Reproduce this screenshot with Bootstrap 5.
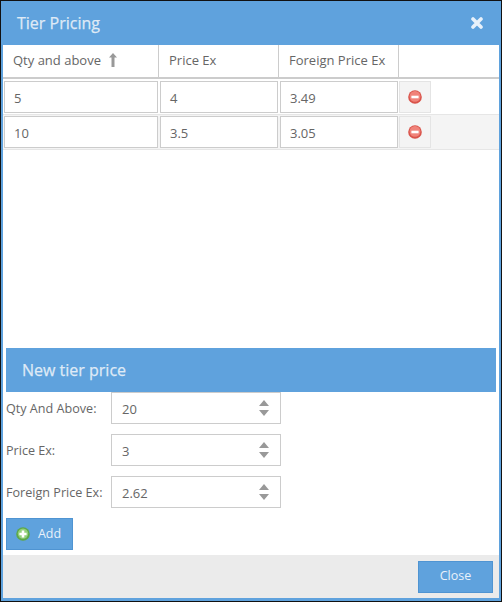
<!DOCTYPE html>
<html lang="en">
<head>
<meta charset="utf-8">
<title>Tier Pricing</title>
<link rel="stylesheet" href="https://cdn.jsdelivr.net/npm/bootstrap@5.3.0/dist/css/bootstrap.min.css">
<style>
html,body{margin:0;padding:0;background:#fff;}
body{font-family:"Open Sans",sans-serif;font-size:13px;color:#666;width:502px;height:602px;overflow:hidden;}
.win{width:502px;height:602px;border:1px solid #111;display:flex;flex-direction:column;}
.win-in{flex:1;border:solid #5fa2dd;border-width:0 2px 3px 2px;display:flex;flex-direction:column;min-height:0;background:#fff;}
.win-head{height:44px;flex:none;background:#5fa2dd;color:#dfeaf6;margin:0 -2px;padding:0 16px;display:flex;align-items:center;justify-content:space-between;font-size:16px;font-weight:500;-webkit-text-stroke:.25px #dfeaf6;}
.win-head svg{margin-right:2px;}
.tier-table{width:100%;table-layout:fixed;border-collapse:separate;border-spacing:0;margin:0;}
.tier-table th{height:34px;font-weight:400;padding:0 10px;border-right:1px solid #ccc;border-bottom:2px solid #ccc;color:#666;vertical-align:middle;background:#fff;}
.tier-table th:last-child{border-right:0;}
.tier-table td{padding:2px 1px 1px 1px;border-bottom:1px solid #e6e6e6;height:36px;vertical-align:middle;}
.tier-table td:last-child{padding-left:0;}
.tier-table tr.alt td{background:#f4f4f4;padding-top:1px;height:35px;}
.cell-inp{display:block;width:100%;height:32px;border:1px solid #ccc;background:#fff;padding:0 9px;line-height:32px;color:#666;}
.del-btn{display:flex;align-items:center;justify-content:center;width:32px;height:32px;background:#f4f4f4;border:1px solid #e4e4e4;padding:0;}
.sort-i{margin-left:8px;vertical-align:-2px;}
.tbl-area{flex:1;min-height:0;}
.sec-head{margin:0 3px;height:44px;background:#5fa2dd;color:#dfeaf6;font-size:16px;font-weight:500;-webkit-text-stroke:.25px #dfeaf6;display:flex;align-items:center;padding-left:16px;flex:none;}
.frm{margin:0 3px;display:flex;flex-direction:column;gap:10px;flex:none;}
.frm-row{display:flex;align-items:center;height:32px;}
.frm-row label{width:105px;flex:none;margin:0;padding-top:2px;color:#666;white-space:nowrap;font-size:12.6px;}
.num-box{width:170px;height:32px;border:1px solid #ccc;display:flex;align-items:center;justify-content:space-between;padding:0 11px 0 10px;color:#666;}
.num-box span{position:relative;top:2px;}
.blue-btn{background:#5fa2dd;border:1px solid #4f94d2;color:#e8f1fa;border-radius:0;font-size:12.5px;height:32px;padding:0;display:inline-flex;align-items:center;justify-content:center;}
.add-btn{width:67px;gap:8px;margin:10px 3px 5px;flex:none;padding-right:2px;}
.foot{flex:none;height:43px;background:#ebebeb;display:flex;align-items:center;justify-content:flex-end;padding-right:6px;}
.close-btn{width:75px;}
</style>
</head>
<body>
<div class="win">
<div class="win-in">
  <div class="win-head">
    <span>Tier Pricing</span>
    <svg width="12" height="12" viewBox="0 0 12 12"><path d="M2 2 L10 10 M10 2 L2 10" stroke="#e8f1fa" stroke-width="3.6" stroke-linecap="round"/></svg>
  </div>
  <div class="tbl-area">
    <table class="tier-table">
      <colgroup><col style="width:156px"><col style="width:120px"><col style="width:120px"><col></colgroup>
      <thead><tr>
        <th>Qty and above<svg class="sort-i" width="8" height="14" viewBox="0 0 8 14"><path d="M4 0 L8 4.5 H5.5 V14 H2.5 V4.5 H0 Z" fill="#999"/></svg></th>
        <th>Price Ex</th><th>Foreign Price Ex</th><th></th>
      </tr></thead>
      <tbody>
        <tr>
          <td><div class="cell-inp">5</div></td><td><div class="cell-inp">4</div></td><td><div class="cell-inp">3.49</div></td>
          <td><button class="del-btn" type="button" aria-label="Remove"><svg width="14" height="14" viewBox="0 0 14 14"><circle cx="7" cy="7" r="6.8" fill="#d9534a"/><circle cx="7" cy="6.4" r="5.4" fill="#f0837a"/><rect x="3.4" y="5.7" width="7.2" height="2.6" fill="#fff"/></svg></button></td>
        </tr>
        <tr class="alt">
          <td><div class="cell-inp">10</div></td><td><div class="cell-inp">3.5</div></td><td><div class="cell-inp">3.05</div></td>
          <td><button class="del-btn" type="button" aria-label="Remove"><svg width="14" height="14" viewBox="0 0 14 14"><circle cx="7" cy="7" r="6.8" fill="#d9534a"/><circle cx="7" cy="6.4" r="5.4" fill="#f0837a"/><rect x="3.4" y="5.7" width="7.2" height="2.6" fill="#fff"/></svg></button></td>
        </tr>
      </tbody>
    </table>
  </div>
  <div class="sec-head">New tier price</div>
  <div class="frm">
    <div class="frm-row"><label>Qty And Above:</label><div class="num-box"><span>20</span><svg width="10" height="16" viewBox="0 0 10 16"><path d="M5 0 L10 6 H0 Z M0 10 H10 L5 16 Z" fill="#999"/></svg></div></div>
    <div class="frm-row"><label>Price Ex:</label><div class="num-box"><span>3</span><svg width="10" height="16" viewBox="0 0 10 16"><path d="M5 0 L10 6 H0 Z M0 10 H10 L5 16 Z" fill="#999"/></svg></div></div>
    <div class="frm-row"><label>Foreign Price Ex:</label><div class="num-box"><span>2.62</span><svg width="10" height="16" viewBox="0 0 10 16"><path d="M5 0 L10 6 H0 Z M0 10 H10 L5 16 Z" fill="#999"/></svg></div></div>
  </div>
  <button class="btn blue-btn add-btn" type="button"><svg width="14" height="14" viewBox="0 0 14 14"><circle cx="7" cy="7" r="6.8" fill="#5da84a"/><circle cx="7" cy="6.6" r="5.2" fill="#93d07c"/><path d="M5.7 3.4 H8.3 V5.7 H10.6 V8.3 H8.3 V10.6 H5.7 V8.3 H3.4 V5.7 H5.7 Z" fill="#fff"/></svg>Add</button>
  <div class="foot"><button class="btn blue-btn close-btn" type="button">Close</button></div>
</div>
</div>
</body>
</html>
